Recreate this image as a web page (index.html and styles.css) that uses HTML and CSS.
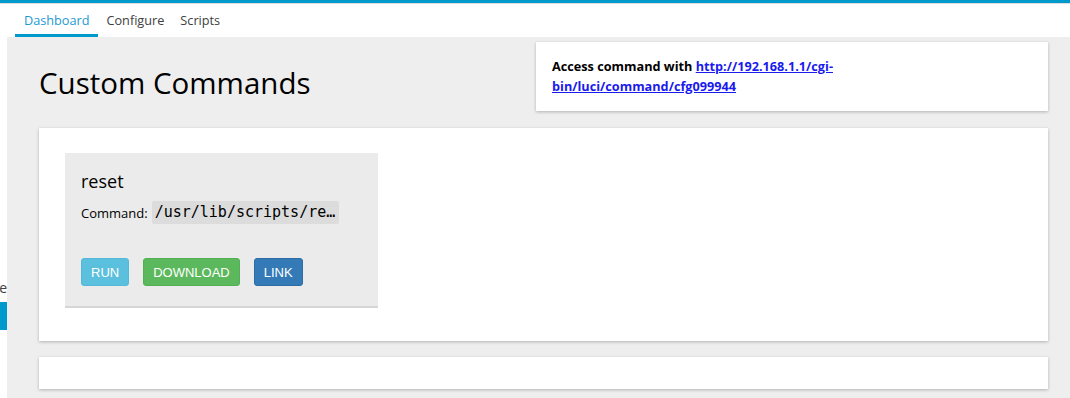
FILE: index.html
```html
<html>
<head>
    <meta charset="UTF-8" />
    <link rel="stylesheet" href="styles.css">
</head>
<body>

  <div class="topbar"></div>
  <ul class="tabs">
      <li class="tab active">Dashboard</li>
      <li class="tab">Configure</li>
      <li class="tab">Scripts</li>
  </ul>

  <div class="layout">
      <div class="sidebar">
          <ul class="side-menu">
              <li class="side-item">Online</li>
              <li class="side-item current">System</li>
          </ul>
      </div>

      <div class="main">
          <div class="title-row">
              <h2 class="page-title">Custom Commands</h2>
              <div class="card access">
                  <p class="access-text"><strong>Access command with <a href="#">http://192.168.1.1/cgi-bin/luci/command/cfg099944</a></strong></p>
              </div>
          </div>

          <div class="card commands">
              <div class="command">
                  <h3 class="command-name">reset</h3>
                  <div class="command-line">
                      Command: <code class="command-path">/usr/lib/scripts/reset.sh</code>
                  </div>
                  <div class="actions">
                      <button class="btn btn-run">RUN</button>
                      <button class="btn btn-download">DOWNLOAD</button>
                      <button class="btn btn-link">LINK</button>
                  </div>
              </div>
          </div>

          <div class="card footer-card"></div>
      </div>
  </div>

</body>
</html>
```

FILE: styles.css
```css
body {
    margin: 0;
    background: #fff;
    font-family: "Open Sans", "Noto Sans", sans-serif;
    color: #000;
    overflow: hidden;
}

.topbar {
    height: 3px;
    background: #0099cc;
    box-shadow: 0 1px 1px rgba(0, 0, 0, 0.15);
}

.tabs {
    display: flex;
    margin: 0;
    padding: 0 0 0 15px;
    list-style: none;
    height: 34px;
}

.tab {
    padding: 8px 8px 0;
    font-size: 12.7px;
    color: #404040;
    box-sizing: border-box;
    height: 34px;
}

.tab.active {
    padding: 8px 9px 0;
    color: #1e9ad0;
    border-bottom: 3px solid #0099cc;
}

.layout {
    display: flex;
    height: 361px;
}

.sidebar {
    width: 7px;
    overflow: hidden;
    flex-shrink: 0;
}

.side-menu {
    list-style: none;
    margin: 0 0 0 -193px;
    padding: 237px 0 0;
    width: 200px;
}

.side-item {
    height: 28px;
    line-height: 28px;
    text-align: right;
    font-size: 14px;
    color: #404040;
}

.side-item.current {
    padding-right: 24px;
    background: #0099cc;
    color: #fff;
}

.main {
    flex: 1;
    background: #eeeeee;
    padding: 5px 22px 0 32px;
}

.title-row {
    display: flex;
    justify-content: space-between;
    align-items: flex-start;
}

.page-title {
    margin: 20px 0 0;
    font-size: 29.5px;
    font-weight: normal;
}

.card {
    background: #fff;
    box-shadow: 0 1px 3px rgba(0, 0, 0, 0.25);
}

.access {
    width: 512px;
    height: 69px;
    box-sizing: border-box;
    padding: 14px 16px;
}

.access-text {
    margin: 0;
    width: 320px;
    font-size: 12.7px;
    line-height: 20px;
}

.access-text a {
    color: #1a1aee;
}

.commands {
    margin-top: 17px;
    padding: 25px 26px 33px;
}

.command {
    width: 313px;
    box-sizing: border-box;
    background: #ebebeb;
    border-bottom: 2px solid #d6d6d6;
    padding: 16px 16px 20px;
}

.command-name {
    margin: 0 0 8px;
    font-size: 18px;
    font-weight: normal;
    line-height: 24px;
}

.command-line {
    font-size: 13px;
    display: flex;
    align-items: center;
    gap: 4px;
}

.command-path {
    display: inline-block;
    width: 181px;
    padding: 2px 3px;
    background: #dcdcdc;
    border-radius: 2px;
    font-family: "DejaVu Sans Mono", monospace;
    font-size: 15px;
    line-height: 19px;
    white-space: nowrap;
    overflow: hidden;
    text-overflow: ellipsis;
}

.actions {
    display: flex;
    gap: 14px;
    margin-top: 34px;
}

.btn {
    height: 28px;
    padding: 0 9px;
    border: 1px solid transparent;
    border-radius: 3px;
    font-family: "Liberation Sans", Arial, sans-serif;
    font-size: 13px;
    color: #fff;
}

.btn-run {
    background: #5bc0de;
    border-color: #52b9d8;
}

.btn-download {
    background: #5cb85c;
    border-color: #52b052;
}

.btn-link {
    background: #337ab7;
    border-color: #2e6da4;
}

.footer-card {
    margin-top: 16px;
    height: 32px;
}
```
